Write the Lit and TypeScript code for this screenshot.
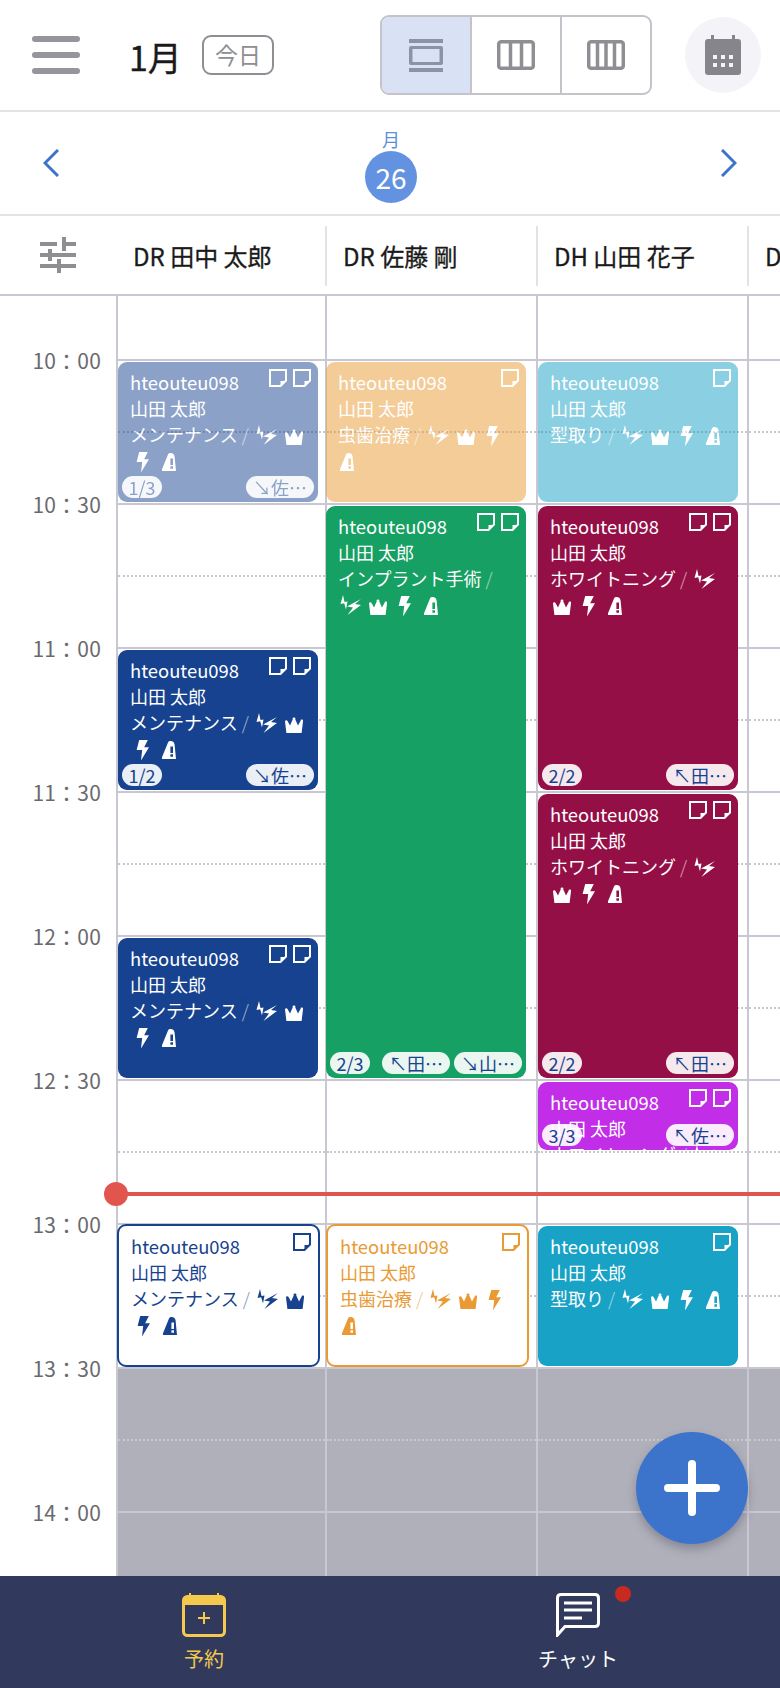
import { LitElement, css, html, svg } from "lit";
import { customElement } from "lit/decorators.js";

type Mark = "bolts" | "crown" | "bolt" | "bell";

interface Booking {
  col: number;
  start: number; // minutes after 10:00
  mins: number;
  color: string;
  left: number;
  service: string;
  notes: number;
  faded?: boolean;
  outline?: boolean;
  pills?: string[];
}

const HALF_HOUR = 144;
const FIRST_LINE = 63;
const MARKS: Mark[] = ["bolts", "crown", "bolt", "bell"];

const BLUE = "#17428f";
const ORANGE = "#ea9a33";
const TEAL = "#17a2c6";
const GREEN = "#16a063";
const CRIMSON = "#950f47";
const PURPLE = "#c22de8";

const bookings: Booking[] = [
  { col: 0, start: 0, mins: 30, color: BLUE, left: 0, service: "メンテナンス", notes: 2, faded: true, pills: ["1/3", "↘佐⋯"] },
  { col: 0, start: 60, mins: 30, color: BLUE, left: 0, service: "メンテナンス", notes: 2, pills: ["1/2", "↘佐⋯"] },
  { col: 0, start: 120, mins: 30, color: BLUE, left: 0, service: "メンテナンス", notes: 2 },
  { col: 0, start: 180, mins: 30, color: BLUE, left: -1, service: "メンテナンス", notes: 1, outline: true },
  { col: 1, start: 0, mins: 30, color: ORANGE, left: -1, service: "虫歯治療", notes: 1, faded: true },
  { col: 1, start: 30, mins: 120, color: GREEN, left: -1, service: "インプラント手術", notes: 2, pills: ["2/3", "↖田⋯", "↘山⋯"] },
  { col: 1, start: 180, mins: 30, color: ORANGE, left: -1, service: "虫歯治療", notes: 1, outline: true },
  { col: 2, start: 0, mins: 30, color: TEAL, left: 0, service: "型取り", notes: 1, faded: true },
  { col: 2, start: 30, mins: 60, color: CRIMSON, left: 0, service: "ホワイトニング", notes: 2, pills: ["2/2", "↖田⋯"] },
  { col: 2, start: 90, mins: 60, color: CRIMSON, left: 0, service: "ホワイトニング", notes: 2, pills: ["2/2", "↖田⋯"] },
  { col: 2, start: 150, mins: 15, color: PURPLE, left: 0, service: "ホワイトニング", notes: 2, pills: ["3/3", "↖佐⋯"] },
  { col: 2, start: 180, mins: 30, color: TEAL, left: 0, service: "型取り", notes: 1 },
];

const staff = ["DR 田中 太郎", "DR 佐藤 剛", "DH 山田 花子", "DH 鈴木 一郎"];
const times = ["10：00", "10：30", "11：00", "11：30", "12：00", "12：30", "13：00", "13：30", "14：00"];

const noteIcon = html`<svg class="note" viewBox="0 0 18 18">
  <path d="M1 1H17V11.5L11.5 17H1Z" fill="none" stroke="currentColor" stroke-width="2" />
  <path d="M16 12H11.5V16.5Z" fill="currentColor" />
</svg>`;

const markPaths = {
  bolts: svg`<path d="M3 0L.5 9 4.2 8.2 6 14.5 7.5 6.5 4.5 7Z" /><path d="M21 4L7 11.5 13 12.5 7.5 20 21 10 15 9Z" />`,
  crown: svg`<path d="M0 4.5A1.3 1.3 0 0 1 2.4 3.8L5 8.4 7.8 2.2A1.3 1.3 0 1 1 10.2 2.2L13 8.4 15.6 3.8A1.3 1.3 0 1 1 18 4.5L16.6 16H1.4Z" />`,
  bolt: svg`<path d="M3.2 0H11.8L8.2 7.2H13L5 20.5 6.2 10H.6Z" />`,
  bell: svg`<path fill-rule="evenodd" d="M8.5 0C10.6 0 12.3 1 12.6 3.5L14 18H0V16.2L6 1.5C6.4.5 7.2 0 8.5 0ZM8.4 5.5V12H11V5.5ZM8.4 13.2V15.8H11V13.2Z" />`,
};
const markBoxes = { bolts: "0 0 21 20", crown: "0 0 18 16", bolt: "0 0 13 20.5", bell: "0 0 14 18" };

@customElement("app-root")
export class AppRoot extends LitElement {
  static styles = css`
    :host {
      display: block;
      width: 780px;
      height: 1688px;
      overflow: hidden;
      position: relative;
      background: #fff;
      color: #1a1a1a;
      font-family: "Noto Sans CJK JP", "Noto Sans", sans-serif;
    }
    svg {
      display: block;
    }

    .top {
      height: 110px;
      display: flex;
      align-items: center;
      border-bottom: 2px solid #e3e3e6;
    }
    .burger {
      margin-left: 32px;
      width: 48px;
      display: flex;
      flex-direction: column;
      gap: 10.5px;
    }
    .burger i {
      display: block;
      height: 5.5px;
      border-radius: 3px;
      background: #96959c;
    }
    .month {
      margin: 4px 0 0 49px;
      font-size: 34px;
      -webkit-text-stroke: 0.4px #1a1a1a;
      line-height: 40px;
      width: 73px;
    }
    .today {
      width: 72px;
      height: 40px;
      box-sizing: border-box;
      border: 2px solid #8e8e93;
      border-radius: 9px;
      color: #8e8e93;
      font-size: 23px;
      line-height: 35px;
      text-align: center;
    }
    .views {
      margin-left: 106px;
      width: 272px;
      height: 80px;
      box-sizing: border-box;
      display: flex;
      border: 2px solid #c4c3ca;
      border-radius: 9px;
      overflow: hidden;
    }
    .views div {
      flex: 1;
      display: flex;
      align-items: center;
      justify-content: center;
      color: #8e8e93;
      border-left: 2px solid #c4c3ca;
    }
    .views div:first-child {
      border-left: 0;
      background: #d9e2f5;
      color: #8a94a8;
    }
    .cal-btn {
      margin-left: 33px;
      width: 76px;
      height: 76px;
      border-radius: 50%;
      background: #f4f3f7;
      display: flex;
      align-items: center;
      justify-content: center;
      color: #86858c;
    }

    .days {
      height: 102px;
      display: flex;
      align-items: center;
      justify-content: space-between;
      padding: 0 43px;
      border-bottom: 2px solid #e3e3e6;
      color: #3c74cc;
    }
    .day {
      display: flex;
      flex-direction: column;
      align-items: center;
      margin-left: 2px;
      padding-top: 4px;
      font-size: 18px;
      line-height: 24px;
      color: #5d8fd9;
    }
    .day b {
      display: block;
      width: 52px;
      height: 52px;
      border-radius: 50%;
      background: #6393e0;
      color: #fff;
      font-size: 28px;
      font-weight: 400;
      line-height: 52px;
      text-align: center;
    }

    .staff {
      height: 78px;
      display: flex;
      border-bottom: 2px solid #c9c8d2;
    }
    .tune {
      width: 116px;
      display: flex;
      align-items: center;
      padding-left: 40px;
      box-sizing: border-box;
      color: #8e8e93;
    }
    .name {
      padding-left: 15px;
      margin: 10px 0 8px;
      font-size: 24px;
      -webkit-text-stroke: 0.3px #1a1a1a;
      line-height: 60px;
      white-space: nowrap;
      overflow: hidden;
      box-sizing: border-box;
      border-left: 2px solid transparent;
    }
    .name + .name {
      border-left-color: #e3e3e6;
      padding-left: 16px;
    }

    .grid {
      height: 1280px;
      display: flex;
      overflow: hidden;
      position: relative;
    }
    .times {
      width: 116px;
      flex: none;
      margin-top: -8px;
    }
    .times div {
      height: 144px;
      line-height: 144px;
      text-align: right;
      padding-right: 15px;
      font-size: 21px;
      letter-spacing: 0.2px;
      color: #6a6a6e;
    }
    .col {
      position: relative;
      flex: none;
      border-left: 2px solid #c9c8d2;
      box-sizing: border-box;
    }
    .head {
      height: 63px;
    }
    .slot {
      height: 72px;
      box-sizing: border-box;
      border-top: 2px solid #c9c8d2;
    }
    .slot.dot {
      border-top-style: dotted;
    }
    .slot.closed {
      background: #b0b0bb;
    }

    .card {
      position: absolute;
      box-sizing: border-box;
      width: 200px;
      padding: 7px 10px 0 12px;
      border-radius: 9px;
      overflow: hidden;
      color: #fff;
      font-size: 18px;
      line-height: 26px;
    }
    .card.faded {
      opacity: 0.5;
    }
    .card.outline {
      background: #fff !important;
      border: 2px solid currentColor;
      padding: 7px 4px 0 12px;
      width: 203px;
    }
    .card p {
      margin: 0;
      white-space: nowrap;
    }
    .card p.id {
      font-size: 18.4px;
    }
    .card p.svc {
      white-space: normal;
    }
    .slash {
      font-weight: 300;
      opacity: 0.6;
      margin: 0 5px 0 4px;
    }
    .mark {
      display: inline-block;
      vertical-align: -3px;
      fill: currentColor;
    }
    .mark.bolts {
      width: 21px;
      height: 20px;
      margin: 0 5px 0 2px;
    }
    .mark.crown {
      width: 18px;
      height: 16px;
      margin: 0 5px 0 3px;
    }
    .mark.bolt {
      width: 13px;
      height: 20.5px;
      margin: 0 11px 0 6px;
      vertical-align: -4px;
    }
    .mark.bell {
      width: 14px;
      height: 18px;
      margin: 0 0 0 2px;
    }
    .notes {
      position: absolute;
      top: 7px;
      right: 7px;
      display: flex;
      gap: 6px;
    }
    .note {
      width: 18px;
      height: 18px;
    }
    .pills {
      position: absolute;
      left: 4px;
      right: 4px;
      bottom: 4px;
      display: flex;
      justify-content: flex-end;
      gap: 4px;
    }
    .pill {
      height: 22px;
      min-width: 40px;
      box-sizing: border-box;
      padding: 0 5px;
      border-radius: 11px;
      background: rgba(255, 255, 255, 0.91);
      color: #17428f;
      font-size: 18px;
      line-height: 22px;
      text-align: center;
      white-space: nowrap;
    }
    .pill.wide {
      width: 68px;
    }
    .pill:first-child {
      margin-right: auto;
    }

    .now {
      position: absolute;
      left: 116px;
      right: 0;
      top: 896px;
      height: 4px;
      background: #e2554f;
    }
    .now::before {
      content: "";
      position: absolute;
      left: -12px;
      top: -10px;
      width: 24px;
      height: 24px;
      border-radius: 50%;
      background: #e2554f;
    }

    .fab {
      position: absolute;
      left: 636px;
      top: 1432px;
      width: 112px;
      height: 112px;
      border-radius: 50%;
      background: #3c74cc;
      box-shadow: 0 5px 10px rgba(60, 60, 80, 0.35);
      display: flex;
      align-items: center;
      justify-content: center;
    }

    .tabs {
      height: 112px;
      display: flex;
      justify-content: space-between;
      padding: 0 152px 0 154px;
      background: #313a5c;
      color: #fff;
    }
    .tab {
      width: 100px;
      display: flex;
      flex-direction: column;
      align-items: center;
      padding-top: 17px;
      box-sizing: border-box;
      position: relative;
      font-size: 20px;
      line-height: 28px;
      gap: 8px;
    }
    .tab.on {
      color: #f5c94e;
    }
    .dot-badge {
      position: absolute;
      left: 87px;
      top: 10px;
      width: 16px;
      height: 16px;
      border-radius: 50%;
      background: #c92a20;
    }
  `;

  private renderCard(b: Booking) {
    const top = FIRST_LINE + (b.start / 30) * HALF_HOUR + (b.outline ? 1 : 3);
    const height = (b.mins / 30) * HALF_HOUR - (b.outline ? 1 : 4);
    const colors = b.outline ? `color:${b.color}` : `background:${b.color}`;
    return html`<div
      class="card ${b.faded ? "faded" : ""} ${b.outline ? "outline" : ""}"
      style="top:${top}px;left:${b.left}px;height:${height}px;${colors}"
    >
      <p class="id">hteouteu098</p>
      <p>山田 太郎</p>
      <p class="svc">${b.service}<span class="slash">/</span>${MARKS.map(
          (m) => html`<svg class="mark ${m}" viewBox=${markBoxes[m]}>${markPaths[m]}</svg>`
        )}</p>
      <div class="notes">${Array.from({ length: b.notes }, () => noteIcon)}</div>
      ${b.pills
        ? html`<div class="pills">
            ${b.pills.map((p) => html`<span class="pill ${p.includes("/") ? "" : "wide"}">${p}</span>`)}
          </div>`
        : ""}
    </div>`;
  }

  private renderCol(col: number, width: number) {
    // one slot per 15 minutes from 10:00, closed from 13:30
    const slots = Array.from({ length: 18 }, (_, i) => i);
    return html`<div class="col" style="width:${width}px">
      <div class="head"></div>
      ${slots.map(
        (i) => html`<div class="slot ${i % 2 ? "dot" : ""} ${i >= 14 ? "closed" : ""}"></div>`
      )}
      ${bookings.filter((b) => b.col === col).map((b) => this.renderCard(b))}
    </div>`;
  }

  render() {
    const widths = [209, 211, 211, 33];
    return html`
      <div class="top">
        <div class="burger"><i></i><i></i><i></i></div>
        <div class="month">1月</div>
        <div class="today">今日</div>
        <div class="views">
          <div>
            <svg width="34" height="33" viewBox="0 0 34 33" fill="currentColor">
              <rect x="0" y="0" width="34" height="4" />
              <rect x="0" y="29" width="34" height="4" />
              <path fill-rule="evenodd" d="M2 7H32Q34 7 34 9V24Q34 26 32 26H2Q0 26 0 24V9Q0 7 2 7ZM3.5 10V23H30.5V10Z" />
            </svg>
          </div>
          <div>
            <svg width="38" height="30" viewBox="0 0 38 30" fill="none" stroke="currentColor" stroke-width="3.5">
              <rect x="1.7" y="1.7" width="34.6" height="26.6" rx="2.5" />
              <path d="M13.5 2V28M24.5 2V28" />
            </svg>
          </div>
          <div>
            <svg width="38" height="30" viewBox="0 0 38 30" fill="none" stroke="currentColor" stroke-width="3.5">
              <rect x="1.7" y="1.7" width="34.6" height="26.6" rx="2.5" />
              <path d="M10.5 2V28M19 2V28M27.5 2V28" />
            </svg>
          </div>
        </div>
        <div class="cal-btn">
          <svg width="36" height="40" viewBox="0 0 36 40" fill="currentColor">
            <rect x="6" y="0" width="3" height="6" />
            <rect x="27" y="0" width="3" height="6" />
            <rect x="0" y="4" width="36" height="36" rx="3" />
            <g fill="#f4f3f7">
              <rect x="8" y="20" width="4" height="4" />
              <rect x="16" y="20" width="4" height="4" />
              <rect x="24" y="20" width="4" height="4" />
              <rect x="8" y="28" width="4" height="4" />
              <rect x="16" y="28" width="4" height="4" />
              <rect x="24" y="28" width="4" height="4" />
            </g>
          </svg>
        </div>
      </div>

      <div class="days">
        <svg width="16" height="28" viewBox="0 0 16 28" fill="none" stroke="currentColor" stroke-width="3">
          <path d="M15 1L2 14 15 27" />
        </svg>
        <div class="day">月<b>26</b></div>
        <svg width="16" height="28" viewBox="0 0 16 28" fill="none" stroke="currentColor" stroke-width="3">
          <path d="M1 1L14 14 1 27" />
        </svg>
      </div>

      <div class="staff">
        <div class="tune">
          <svg width="36" height="36" viewBox="0 0 36 36" fill="currentColor">
            <rect x="0" y="5" width="17" height="4" />
            <rect x="22" y="0" width="4" height="14" />
            <rect x="26" y="5" width="10" height="4" />
            <rect x="0" y="16" width="8" height="4" />
            <rect x="8" y="12" width="4" height="12" />
            <rect x="12" y="16" width="24" height="4" />
            <rect x="0" y="27" width="17" height="4" />
            <rect x="17" y="22" width="4" height="14" />
            <rect x="21" y="27" width="15" height="4" />
          </svg>
        </div>
        ${staff.map((n, i) => html`<div class="name" style="width:${widths[i]}px">${n}</div>`)}
      </div>

      <div class="grid">
        <div class="times">${times.map((t) => html`<div>${t}</div>`)}</div>
        ${widths.map((w, i) => this.renderCol(i, w))}
        <div class="now"></div>
      </div>

      <div class="fab">
        <svg width="56" height="56" viewBox="0 0 56 56" fill="#fff">
          <rect x="0" y="24" width="56" height="8" rx="4" />
          <rect x="24" y="0" width="8" height="56" rx="4" />
        </svg>
      </div>

      <div class="tabs">
        <div class="tab on">
          <svg width="44" height="44" viewBox="0 0 44 44" fill="none">
            <path d="M8 0V4M36 0V4" stroke="currentColor" stroke-width="2" />
            <rect x="1.5" y="3.5" width="41" height="39" rx="4" stroke="currentColor" stroke-width="3" />
            <path d="M1.5 12V8Q1.5 3 6 3H38Q42.5 3 42.5 8V12Z" fill="currentColor" />
            <path d="M22 19V31M16 25H28" stroke="currentColor" stroke-width="2" />
          </svg>
          <span>予約</span>
        </div>
        <div class="tab">
          <svg width="44" height="44" viewBox="0 0 44 44" fill="none" stroke="currentColor">
            <path d="M5 1.5H39Q42.5 1.5 42.5 5V30Q42.5 33.5 39 33.5H9L1.5 42V5Q1.5 1.5 5 1.5Z" stroke-width="3" />
            <path d="M8 10H36M8 17H36M8 25H26" stroke-width="3" />
          </svg>
          <span>チャット</span>
          <div class="dot-badge"></div>
        </div>
      </div>
    `;
  }
}
